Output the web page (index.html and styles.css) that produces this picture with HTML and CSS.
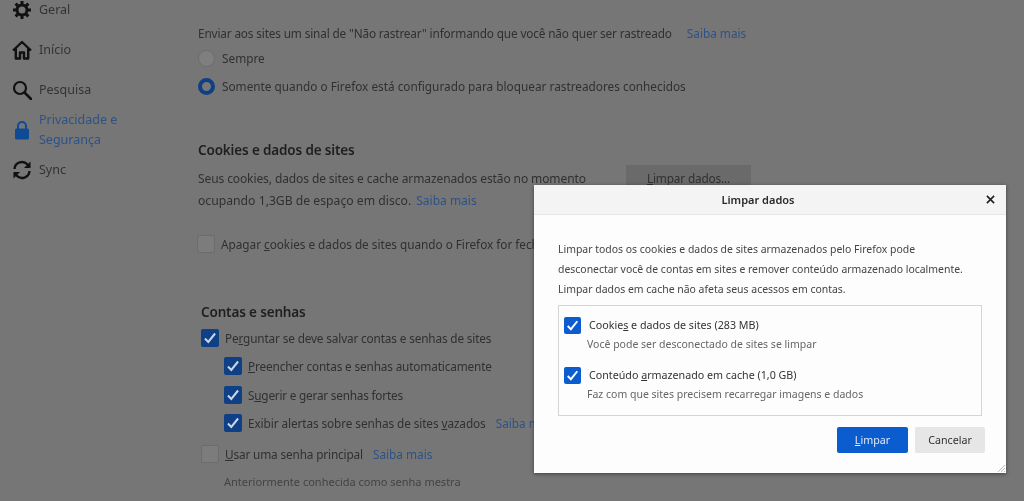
FILE: index.html
```html
<!DOCTYPE html>
<html lang="pt-BR">
<head>
<meta charset="utf-8">
<title>Limpar dados</title>
<link rel="stylesheet" href="styles.css">
</head>
<body>
<div class="page">
  <nav class="sidebar">
    <div class="nav-item nav-geral">
      <svg class="nav-icon" viewBox="0 0 20 20"><path d="M10 1v18M1 10h18M3.600 3.600l12.800 12.800M16.400 3.600 3.600 16.400" stroke="#111" stroke-width="3"/><circle cx="10" cy="10" r="5" fill="#767676" stroke="#111" stroke-width="3"/></svg>
      <span>Geral</span>
    </div>
    <div class="nav-item">
      <svg class="nav-icon" viewBox="0 0 20 20"><path d="M1 10.500 10 2l9 8.500M3.800 8.500V18.500H8V12.500H12V18.500H16.200V8.500" fill="none" stroke="#111" stroke-width="2.400" stroke-linejoin="round"/></svg>
      <span>Início</span>
    </div>
    <div class="nav-item">
      <svg class="nav-icon" viewBox="0 0 20 20"><circle cx="8" cy="8" r="6" fill="none" stroke="#111" stroke-width="2.200"/><path d="M12.500 12.500 19 19" stroke="#111" stroke-width="2.600" stroke-linecap="round"/></svg>
      <span>Pesquisa</span>
    </div>
    <div class="nav-item nav-active">
      <svg class="nav-icon" viewBox="0 0 20 20"><path d="M6 9V6a4 4 0 0 1 8 0v3" fill="none" stroke="#0f4a94" stroke-width="2"/><rect x="3" y="8.500" width="14" height="11" rx="1.500" fill="#0f4a94"/></svg>
      <span>Privacidade e<br>Segurança</span>
    </div>
    <div class="nav-item nav-sync">
      <svg class="nav-icon" viewBox="0 0 20 20"><path d="M2.500 9A7.500 7.500 0 0 1 15.500 4.500L17.500 6.500" fill="none" stroke="#111" stroke-width="2.400"/><path d="M18.500 1.500V8H12z" fill="#111"/><path d="M17.500 11A7.500 7.500 0 0 1 4.500 15.500L2.500 13.500" fill="none" stroke="#111" stroke-width="2.400"/><path d="M1.500 18.500V12H8z" fill="#111"/></svg>
      <span>Sync</span>
    </div>
  </nav>

  <main class="content">
    <p class="line dnt">Enviar aos sites um sinal de "Não rastrear" informando que você não quer ser rastreado <a class="link">Saiba mais</a></p>
    <div class="option option-plain"><span class="radio"></span><span>Sempre</span></div>
    <div class="option option-second option-plain"><span class="radio radio-on"></span><span>Somente quando o Firefox está configurado para bloquear rastreadores conhecidos</span></div>

    <h2 class="heading heading-cookies">Cookies e dados de sites</h2>
    <div class="cookie-row">
      <p class="cookie-text">Seus cookies, dados de sites e cache armazenados estão no momento<br><span class="cookie-second">ocupando 1,3GB de espaço em disco.</span> <a class="link link-cookie">Saiba mais</a></p>
      <button class="bg-button"><u>L</u>impar dados...</button>
    </div>
    <div class="option option-erase"><span class="check"></span><span>Apagar <u>c</u>ookies e dados de sites quando o Firefox for fechado</span></div>

    <section class="accounts">
      <h2 class="heading">Contas e senhas</h2>
      <div class="option option-ask"><span class="check check-on"><svg viewBox="0 0 16 16"><path d="M3.500 8.500 6.500 11.500 12.500 4" fill="none" stroke="#c9d6e6" stroke-width="1.800"/></svg></span><span>Pe<u>r</u>guntar se deve salvar contas e senhas de sites</span></div>
      <div class="option option-sub"><span class="check check-on"><svg viewBox="0 0 16 16"><path d="M3.500 8.500 6.500 11.500 12.500 4" fill="none" stroke="#c9d6e6" stroke-width="1.800"/></svg></span><span><u>P</u>reencher contas e senhas automaticamente</span></div>
      <div class="option option-sub option-wide"><span class="check check-on"><svg viewBox="0 0 16 16"><path d="M3.500 8.500 6.500 11.500 12.500 4" fill="none" stroke="#c9d6e6" stroke-width="1.800"/></svg></span><span>S<u>u</u>gerir e gerar senhas fortes</span></div>
      <div class="option option-sub option-leaks"><span class="check check-on"><svg viewBox="0 0 16 16"><path d="M3.500 8.500 6.500 11.500 12.500 4" fill="none" stroke="#c9d6e6" stroke-width="1.800"/></svg></span><span>Exibir alertas sobre senhas de sites <u>v</u>azados</span><a class="link link-gap">Saiba mais</a></div>
      <div class="option option-main"><span class="check"></span><span><u>U</u>sar uma senha principal</span><a class="link link-gap">Saiba mais</a></div>
      <p class="hint">Anteriormente conhecida como senha mestra</p>
    </section>
  </main>

  <div class="dialog">
    <header class="dialog-head">
      <span class="dialog-title">Limpar dados</span>
      <svg class="dialog-close" viewBox="0 0 10 10"><path d="M1 1 9 9M9 1 1 9" stroke="#222" stroke-width="1.800"/></svg>
    </header>
    <div class="dialog-body">
      <p class="dialog-text">Limpar todos os cookies e dados de sites armazenados pelo Firefox pode<br>desconectar você de contas em sites e remover conteúdo armazenado localmente.<br>Limpar dados em cache não afeta seus acessos em contas.</p>
      <div class="choices">
        <div class="choice">
          <span class="box"><svg viewBox="0 0 16 16"><path d="M3.500 8.500 6.500 11.500 12.500 4" fill="none" stroke="#fff" stroke-width="1.800"/></svg></span>
          <div class="choice-text"><div class="choice-label">Cookie<u>s</u> e dados de sites (283 MB)</div><div class="choice-sub">Você pode ser desconectado de sites se limpar</div></div>
        </div>
        <div class="choice">
          <span class="box"><svg viewBox="0 0 16 16"><path d="M3.500 8.500 6.500 11.500 12.500 4" fill="none" stroke="#fff" stroke-width="1.800"/></svg></span>
          <div class="choice-text"><div class="choice-label">Conteúdo <u>a</u>rmazenado em cache (1,0 GB)</div><div class="choice-sub">Faz com que sites precisem recarregar imagens e dados</div></div>
        </div>
      </div>
      <div class="actions">
        <button class="btn btn-primary"><u>L</u>impar</button>
        <button class="btn btn-secondary">Cancelar</button>
      </div>
    </div>
    <svg class="grip" viewBox="0 0 8 8"><path d="M8 1 1 8M8 4 4 8M8 7 7 8" stroke="#bbb" stroke-width="1"/></svg>
  </div>
</div>
</body>
</html>
```

FILE: styles.css
```css
* { box-sizing: border-box; }
html, body { margin: 0; height: 501px; overflow: hidden; }
body { background: #767676; }
.page {
  position: relative;
  display: flex;
  width: 1024px;
  height: 501px;
  overflow: hidden;
  background: #767676;
  color: #303030;
  font: 12.2px/18px "Noto Sans", "Open Sans", sans-serif;
  filter: blur(.55px);
}
p, h2 { margin: 0; }

.sidebar { width: 198px; flex: none; padding: 0 0 0 12px; display: flex; flex-direction: column; }
.nav-item { display: flex; align-items: center; gap: 7px; height: 20px; margin-bottom: 20px; font-size: 12.5px; color: #333; }
.nav-icon { width: 20px; height: 20px; flex: none; }
.nav-active { height: 40px; margin-top: -10px; margin-bottom: 10px; line-height: 20px; color: #2c5288; }
.nav-sync { margin-bottom: 0; }

.content { flex: 1; padding-top: 24px; min-width: 0; white-space: nowrap; font-size: 11.8px; letter-spacing: -.15px; }
.line { height: 18px; }
.link { color: #2c5288; letter-spacing: 0; }
.link-gap { margin-left: 4px; }
.link-cookie { margin-left: 2px; }
.dnt .link { margin-left: 12px; }
.option { display: flex; align-items: center; gap: 7px; height: 18px; }
.option-plain { letter-spacing: 0; }
.dnt + .option { margin-top: 7px; }
.option-second { margin-top: 10px; }
.radio { width: 17px; height: 17px; border-radius: 50%; background: #7f7f7f; border: 1px solid #6c6c6c; flex: none; }
.radio-on { border: 4px solid #0f3f85; background: #777; }
.heading { font-size: 13.5px; font-weight: 600; color: #1f1f1f; line-height: 18px; }
.heading-cookies { margin-top: 46px; }
.cookie-row { display: flex; margin-top: 9px; }
.cookie-text { width: 428px; line-height: 22px; flex: none; font-size: 12px; letter-spacing: -.1px; }
.cookie-second { font-size: 12.2px; letter-spacing: 0; }
.bg-button { width: 125px; height: 26px; margin-top: -3px; border: 0; background: #6a6a6a; color: #303030; font: inherit; letter-spacing: inherit; padding: 0; }
.option-erase { margin-top: 23px; gap: 6px; margin-left: -1px; letter-spacing: -.03px; }
.check { width: 18px; height: 18px; background: #7c7c7c; border: 1px solid #6c6c6c; border-radius: 2px; flex: none; display: block; }
.check-on { background: #0f3f85; border: 0; }
.check svg, .box svg { display: block; width: 100%; height: 100%; }

.accounts { margin-top: 50px; padding-left: 3px; }
.accounts .option { gap: 6px; }
.option-ask { margin-top: 8px; }
.option-sub { margin-top: 10px; padding-left: 23px; }
.option-wide { margin-top: 11px; letter-spacing: -.22px; }
.option-leaks { letter-spacing: -.09px; }
.option-main { margin-top: 13px; }
.hint { margin-top: 10px; padding-left: 23px; font-size: 11px; letter-spacing: 0; color: #434343; }

.dialog {
  position: absolute;
  left: 534px;
  top: 185px;
  width: 472px;
  height: 288px;
  background: #fdfdfd;
  box-shadow: 0 1px 4px rgba(0,0,0,.45);
  color: #333;
  font-size: 10.7px;
}
.dialog-head { position: relative; display: flex; align-items: center; justify-content: center; height: 30px; padding: 1px 24px 0 0; background: #f4f4f4; border-bottom: 1px solid #e6e6e6; }
.dialog-title { font-size: 11px; font-weight: 600; color: #2a2a2a; }
.dialog-close { position: absolute; right: 11px; top: 10px; width: 9px; height: 9px; }
.dialog-body { padding: 24px 21px 0 24px; }
.dialog-text { line-height: 20px; color: #444; font-size: 10.45px; }
.choices { margin-top: 6px; width: 424px; height: 111px; border: 1px solid #d5d5d5; padding: 11px 5px 0; }
.choice { display: flex; gap: 8px; height: 50px; }
.box { width: 17px; height: 17px; border-radius: 2px; background: #0a5ccf; flex: none; }
.choice-label { line-height: 17px; color: #333; }
.choice-sub { line-height: 17px; margin-top: 2px; margin-left: -2px; color: #666; font-size: 10.5px; }
.actions { display: flex; justify-content: flex-end; gap: 7px; margin-top: 11px; }
.btn { height: 26px; width: 71px; border: 0; border-radius: 2px; font: inherit; padding: 0; }
.btn-primary { background: #0a5ccf; color: #dfe9f7; }
.btn-secondary { width: 70px; background: #e6e6e6; color: #333; }
.grip { position: absolute; right: 1px; bottom: 1px; width: 8px; height: 8px; }
```
